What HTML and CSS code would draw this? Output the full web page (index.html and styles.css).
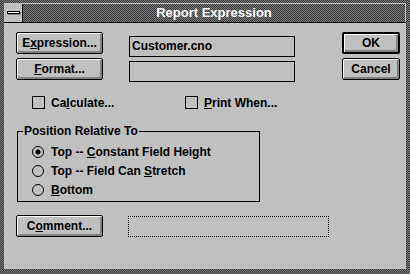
FILE: index.html
```html
<!DOCTYPE html>
<html lang="en">
<head>
    <meta charset="UTF-8">
    <title>Report Expression</title>
    <link rel="stylesheet" href="styles.css">
</head>
<body>

    <div class="window">
        <div class="titlebar">
            <div class="sysmenu"><span class="sysmenu-bar"></span></div>
            <div class="caption">Report Expression</div>
        </div>

        <div class="client">
            <div class="top-row">
                <div class="btn-col">
                    <button class="btn">E<u>x</u>pression...</button>
                    <button class="btn"><u>F</u>ormat...</button>
                </div>
                <div class="field-col">
                    <div class="field">Customer.cno</div>
                    <div class="field"></div>
                </div>
                <div class="btn-col right-col">
                    <button class="btn btn-default">OK</button>
                    <button class="btn">Cancel</button>
                </div>
            </div>

            <div class="check-row">
                <label class="check check-calc"><span class="box"></span><span>Ca<u>l</u>culate...</span></label>
                <label class="check"><span class="box"></span><span><u>P</u>rint When...</span></label>
            </div>

            <fieldset class="group">
                <legend>Position Relative To</legend>
                <div class="radio">
                    <svg width="12" height="12" viewBox="0 0 12 12"><circle cx="6" cy="6" r="5.5" fill="#c0c0c0" stroke="#000"/><circle cx="6" cy="6" r="2.5" fill="#000"/></svg>
                    <span>Top -- <u>C</u>onstant Field Height</span>
                </div>
                <div class="radio">
                    <svg width="12" height="12" viewBox="0 0 12 12"><circle cx="6" cy="6" r="5.5" fill="#c0c0c0" stroke="#000"/></svg>
                    <span>Top -- Field Can <u>S</u>tretch</span>
                </div>
                <div class="radio">
                    <svg width="12" height="12" viewBox="0 0 12 12"><circle cx="6" cy="6" r="5.5" fill="#c0c0c0" stroke="#000"/></svg>
                    <span><u>B</u>ottom</span>
                </div>
            </fieldset>

            <div class="comment-row">
                <button class="btn">C<u>o</u>mment...</button>
                <div class="field field-dotted"></div>
            </div>
        </div>
    </div>

</body>
</html>
```

FILE: styles.css
```css
html, body {
    margin: 0;
    height: 100%;
}

body {
    box-sizing: border-box;
    padding: 3px 4px 5px 4px;
    font-family: 'Liberation Sans', Arial, sans-serif;
    font-size: 12px;
    font-weight: bold;
    color: #000;
    background: repeating-conic-gradient(#3a3a3a 0 25%, #7a7a7a 0 50%) 0 0 / 2px 2px;
}

.window {
    height: 100%;
    box-sizing: border-box;
    padding-top: 1px;
    background-color: #c0c0c0;
    display: flex;
    flex-direction: column;
}

/* title bar */

.titlebar {
    height: 18px;
    display: flex;
    border-bottom: 1px solid #000;
}

.sysmenu {
    width: 18px;
    border-right: 1px solid #000;
    background-color: #c0c0c0;
}

.sysmenu-bar {
    display: block;
    width: 11px;
    height: 1px;
    margin: 7px 0 0 3px;
    background-color: #fff;
    border: 1px solid #000;
    box-shadow: 1px 1px 0 #808080;
}

.caption {
    flex: 1;
    margin-right: 1px;
    line-height: 18px;
    font-size: 13px;
    text-align: center;
    color: #fff;
    background: repeating-conic-gradient(#3a3a3a 0 25%, #7a7a7a 0 50%) 0 0 / 2px 2px;
}

/* client area */

.client {
    flex: 1;
    padding: 9px 0 0 12px;
}

.top-row {
    display: flex;
}

.btn-col {
    width: 87px;
    display: flex;
    flex-direction: column;
    gap: 4px;
}

.right-col {
    width: 58px;
    margin-left: 47px;
}

.btn {
    height: 22px;
    padding: 0;
    font-family: 'Liberation Sans', Arial, sans-serif;
    font-size: 12px;
    font-weight: bold;
    color: #000;
    background-color: #c0c0c0;
    border: 1px solid #000;
    border-radius: 2px;
    box-shadow: inset 1px 1px 0 #fff, inset -2px -2px 0 #808080;
}

.btn-default {
    border-width: 2px;
}

.field-col {
    width: 166px;
    margin: 4px 0 0 26px;
    display: flex;
    flex-direction: column;
    gap: 4px;
}

.field {
    box-sizing: border-box;
    height: 21px;
    padding-left: 2px;
    line-height: 19px;
    border: 1px solid #000;
}

/* checkboxes */

.check-row {
    display: flex;
    margin: 14px 0 0 16px;
}

.check {
    display: flex;
    gap: 6px;
    line-height: 14px;
}

.check-calc {
    width: 153px;
}

.box {
    width: 13px;
    height: 13px;
    box-sizing: border-box;
    border: 1px solid #000;
}

/* position group */

.group {
    width: 243px;
    box-sizing: border-box;
    margin: 14px 0 0 1px;
    padding: 4px 0 2px 5px;
    border: 1px solid #000;
}

.group legend {
    padding: 0 1px;
    line-height: 14px;
}

.radio {
    height: 19px;
    margin-left: 9px;
    display: flex;
    align-items: center;
    gap: 7px;
}

.radio svg {
    display: block;
}

/* comment */

.comment-row {
    display: flex;
    margin-top: 13px;
}

.comment-row .btn {
    width: 87px;
}

.field-dotted {
    width: 201px;
    margin: 1px 0 0 25px;
    border-style: dotted;
}
```
